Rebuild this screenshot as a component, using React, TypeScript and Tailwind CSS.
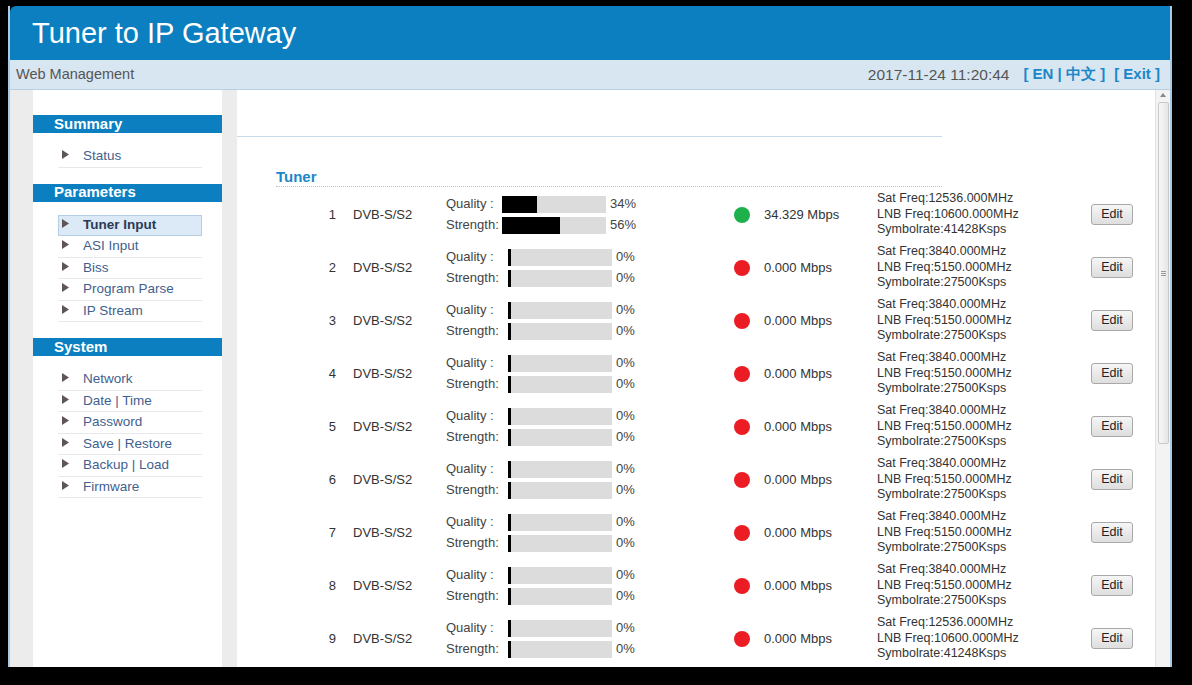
import React from 'react';

type Tuner = {
  id: number;
  quality: number;
  strength: number;
  locked: boolean;
  rate: string;
  sat: string;
  lnb: string;
  sym: string;
};

const tuners: Tuner[] = [
  { id: 1, quality: 34, strength: 56, locked: true, rate: '34.329 Mbps', sat: '12536.000MHz', lnb: '10600.000MHz', sym: '41428Ksps' },
  { id: 2, quality: 0, strength: 0, locked: false, rate: '0.000 Mbps', sat: '3840.000MHz', lnb: '5150.000MHz', sym: '27500Ksps' },
  { id: 3, quality: 0, strength: 0, locked: false, rate: '0.000 Mbps', sat: '3840.000MHz', lnb: '5150.000MHz', sym: '27500Ksps' },
  { id: 4, quality: 0, strength: 0, locked: false, rate: '0.000 Mbps', sat: '3840.000MHz', lnb: '5150.000MHz', sym: '27500Ksps' },
  { id: 5, quality: 0, strength: 0, locked: false, rate: '0.000 Mbps', sat: '3840.000MHz', lnb: '5150.000MHz', sym: '27500Ksps' },
  { id: 6, quality: 0, strength: 0, locked: false, rate: '0.000 Mbps', sat: '3840.000MHz', lnb: '5150.000MHz', sym: '27500Ksps' },
  { id: 7, quality: 0, strength: 0, locked: false, rate: '0.000 Mbps', sat: '3840.000MHz', lnb: '5150.000MHz', sym: '27500Ksps' },
  { id: 8, quality: 0, strength: 0, locked: false, rate: '0.000 Mbps', sat: '3840.000MHz', lnb: '5150.000MHz', sym: '27500Ksps' },
  { id: 9, quality: 0, strength: 0, locked: false, rate: '0.000 Mbps', sat: '12536.000MHz', lnb: '10600.000MHz', sym: '41248Ksps' },
];

const menu = [
  { title: 'Summary', items: ['Status'] },
  { title: 'Parameters', items: ['Tuner Input', 'ASI Input', 'Biss', 'Program Parse', 'IP Stream'] },
  { title: 'System', items: ['Network', 'Date | Time', 'Password', 'Save | Restore', 'Backup | Load', 'Firmware'] },
];

const Arrow = () => (
  <svg width="7" height="9" viewBox="0 0 7 9" className="shrink-0 -mt-[3px]">
    <path d="M0 0 L7 4.5 L0 9 Z" fill="#5f5557" />
  </svg>
);

const Bar: React.FC<{ label: string; pct: number; wide: boolean }> = ({ label, pct, wide }) => (
  <div className="flex h-[21px] items-center">
    <span className={wide ? 'w-[62px] text-[#444]' : 'w-[56px] text-[#444]'}>{label}</span>
    <div className="flex h-[17px] w-[104px] bg-[#dcdcdc]">
      <div className="h-full bg-black" style={{ width: Math.max(3, Math.round((pct * 104) / 100)) }} />
    </div>
    <span className="ml-[4px] text-[#444]">{pct}%</span>
  </div>
);

export default function App() {
  return (
    <div className="h-[685px] w-[1192px] overflow-hidden bg-black pt-[6px] font-['Liberation_Sans',Arial,sans-serif]">
      <div className="ml-[8px] flex h-[661px] w-[1164px] flex-col border-x-2 border-[#a9cbe6]">
        {/* header */}
        <div className="flex h-[54px] items-center rounded-tl-[6px] bg-[#0b7fc0] pl-[22px]">
          <h1 className="text-[29px] leading-none text-white">Tuner to IP Gateway</h1>
        </div>
        <div className="flex h-[30px] items-center justify-between border-b border-[#b9d0e2] bg-[#d8e6f1] pr-[10px]">
          <span className="ml-[6px] whitespace-nowrap text-[14.5px] text-[#555]">Web Management</span>
          <div className="flex items-center">
            <span className="text-[15.5px] text-[#555]">2017-11-24 11:20:44</span>
            <span className="ml-[14px] text-[15px] font-bold text-[#1b87c9]">[ EN | 中文 ]</span>
            <span className="ml-[9px] text-[15px] font-bold text-[#1b87c9]">[ Exit ]</span>
          </div>
        </div>

        {/* body */}
        <div className="flex min-h-0 flex-1">
          <div className="w-[23px] bg-[#ececec]" />
          <aside className="w-[189px] bg-white pt-[25px]">
            {menu.map((sec) => (
              <div key={sec.title} className="mb-[16px]">
                <div className="flex h-[18px] items-center bg-[#0b7fc0] pl-[21px] text-[15px] font-bold text-white">{sec.title}</div>
                <ul className="pt-[13px]">
                  {sec.items.map((it) => {
                    const active = it === 'Tuner Input';
                    return (
                      <li
                        key={it}
                        className={
                          active
                            ? 'ml-[25px] flex h-[21.5px] w-[144px] items-center gap-[14px] border border-[#b6cde4] bg-[#dce9f6] pl-[3px] text-[13.5px] font-bold text-[#2b3a55]'
                            : 'ml-[25px] flex h-[21.5px] w-[144px] items-center gap-[14px] border-b border-[#e6e9ec] pl-[4px] text-[13.5px] text-[#3f5f8e]'
                        }
                      >
                        <Arrow />
                        <span>{it}</span>
                      </li>
                    );
                  })}
                </ul>
              </div>
            ))}
          </aside>
          <div className="w-[15px] bg-[#ececec]" />

          <main className="flex-1 bg-white pt-[46px]">
            <div className="w-[705px] border-b border-[#c9dbea]" />
            <div className="pl-[39px] pt-[31px]">
              <div className="w-[666px] border-b border-dotted border-[#b9c3cc] text-[15px] font-bold leading-[18px] text-[#1b87c9]">Tuner</div>
              <div className="pt-[1px]">
                {tuners.map((t, i) => (
                  <div key={t.id} className="flex h-[53px] items-center text-[13px] text-[#333]">
                    <span className="w-[60px] text-right">{t.id}</span>
                    <span className="w-[110px] pl-[17px]">DVB-S/S2</span>
                    <div className="w-[288px]">
                      <Bar label="Quality :" pct={t.quality} wide={i > 0} />
                      <Bar label="Strength:" pct={t.strength} wide={i > 0} />
                    </div>
                    <span className={t.locked ? 'h-[16px] w-[16px] rounded-full bg-[#1db04b]' : 'h-[16px] w-[16px] rounded-full bg-[#ec1c24]'} />
                    <span className="ml-[14px] w-[113px]">{t.rate}</span>
                    <div className="w-[214px] text-[12.5px] leading-[15.5px]">
                      <div>Sat Freq:{t.sat}</div>
                      <div>LNB Freq:{t.lnb}</div>
                      <div>Symbolrate:{t.sym}</div>
                    </div>
                    <button className="h-[21px] w-[42px] rounded-[3px] border border-[#a9a9a9] bg-gradient-to-b from-[#f6f6f6] to-[#dedede] text-[12.5px] text-[#222]">
                      Edit
                    </button>
                  </div>
                ))}
              </div>
            </div>
          </main>

          {/* scrollbar */}
          <div className="flex w-[15px] flex-col items-center border-l border-[#e2e2e2] bg-[#f3f3f3]">
            <div className="mt-[3px] h-0 w-0 border-x-[3px] border-b-[4px] border-x-transparent border-b-[#888]" />
            <div className="mt-[5px] flex h-[342px] w-[11px] items-center justify-center rounded-[2px] border border-[#c9c9c9] bg-gradient-to-r from-[#f7f7f7] to-[#e6e6e6]">
              <div className="flex flex-col gap-[1px]">
                <div className="h-px w-[5px] bg-[#999]" />
                <div className="h-px w-[5px] bg-[#999]" />
                <div className="h-px w-[5px] bg-[#999]" />
              </div>
            </div>
          </div>
        </div>
      </div>
    </div>
  );
}
